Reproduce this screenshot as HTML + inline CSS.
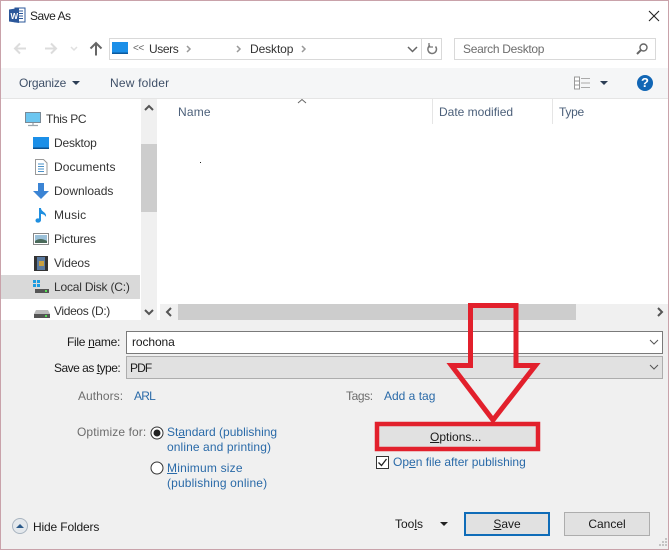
<!DOCTYPE html>
<html><head><meta charset="utf-8"><style>
html,body{margin:0;padding:0}
body{width:669px;height:550px;position:relative;overflow:hidden;background:#fff;font-family:"Liberation Sans",sans-serif;font-size:12px;color:#1a1a1a}
.a{position:absolute}
.t{position:absolute;white-space:nowrap;line-height:16px;height:16px}
.b{color:#2a6aa8}
.g{color:#6d6d6d}
.h{color:#4c607a}
u{text-decoration:underline}
.btn{position:absolute;box-sizing:border-box;background:#e1e1e1;border:1px solid #adadad;text-align:center;line-height:22px}
</style></head><body>
<div class="a" style="left:0;top:68px;width:669px;height:30px;background:#f5f6f7"></div>
<div class="a" style="left:0;top:98px;width:669px;height:1px;background:#e5e5e5"></div>
<div class="a" style="left:0;top:320px;width:669px;height:230px;background:#f0f0f0"></div>

<svg class="a" style="left:9px;top:7px" width="17" height="17" viewBox="0 0 17 17"><rect x="6" y="1" width="10" height="14" fill="#fff" stroke="#2b579a"/><path d="M10 4h4M10 6.500h4M10 9h4M10 11.500h4" stroke="#2b579a"/><path d="M0 2.500 10 1v15L0 14.500z" fill="#2b579a"/><text x="1.500" y="12" font-size="8" font-weight="bold" fill="#fff" font-family="Liberation Sans">W</text></svg>
<div class="t" style="left:30px;top:8px;letter-spacing:-.5px;color:#222">Save As</div>
<svg class="a" style="left:647px;top:9px" width="14" height="14"><path d="M2 2l10 10M12 2 2 12" stroke="#222" stroke-width="1.100" fill="none"/></svg>

<svg class="a" style="left:12px;top:40px" width="100" height="18"><g fill="none" stroke-width="2"><path d="M3 8.500h11M8 3.500l-5 5 5 5" stroke="#dcdcdc"/><path d="M33 8.500h11M39 3.500l5 5-5 5" stroke="#dcdcdc"/><path d="M59 7l3 3 3-3" stroke="#e0e0e0" stroke-width="1.500"/><path d="M84 15.500V3M78.500 8.500l5.500-5.500 5.500 5.500" stroke="#666"/></g></svg>
<div class="a" style="left:109px;top:38px;width:333px;height:22px;box-sizing:border-box;border:1px solid #d9d9d9;background:#fff"></div>
<svg class="a" style="left:112px;top:42px" width="17" height="13"><rect width="16" height="12" fill="#1b8fe8"/><rect y="10.500" width="16" height="1.500" fill="#0c5a9e"/></svg>
<div class="t" style="left:133px;top:41px;color:#666;font-size:10px;letter-spacing:-.5px">&lt;&lt;</div>
<div class="t" style="left:149px;top:41px;letter-spacing:-.4px;color:#333">Users</div>
<div class="t" style="left:250px;top:41px;letter-spacing:-.1px;color:#333">Desktop</div>
<svg class="a" style="left:180px;top:40px" width="130" height="18"><path d="M7 6l3 3-3 3M57 6l3 3-3 3M122 6l3 3-3 3" fill="none" stroke="#999" stroke-width="1.500"/></svg>
<svg class="a" style="left:406px;top:44px" width="14" height="10"><path d="M2 3l4.500 4.500L11 3" fill="none" stroke="#666" stroke-width="1.500"/></svg>
<div class="a" style="left:421px;top:38px;width:1px;height:22px;background:#d9d9d9"></div>
<svg class="a" style="left:425px;top:42px" width="14" height="14"><path d="M10.500 4.500A4.300 4.300 0 1 1 5 3.500" fill="none" stroke="#777" stroke-width="1.500"/><path d="M4 1v4h4" fill="none" stroke="#777" stroke-width="1.300"/></svg>
<div class="a" style="left:454px;top:38px;width:202px;height:22px;box-sizing:border-box;border:1px solid #d9d9d9;background:#fff"></div>
<div class="t" style="left:463px;top:41px;color:#6d6d6d;letter-spacing:-.3px">Search Desktop</div>
<svg class="a" style="left:635px;top:42px" width="14" height="14"><circle cx="8.500" cy="5.500" r="3.500" fill="none" stroke="#666" stroke-width="1.400"/><path d="M6 8l-4 4" stroke="#666" stroke-width="2"/></svg>

<div class="t h" style="left:19px;top:75px;letter-spacing:-.2px;color:#3f5068">Organize</div>
<svg class="a" style="left:72px;top:80px" width="9" height="6"><path d="M0 1h8L4 5z" fill="#2c3e55"/></svg>
<div class="t h" style="left:110px;top:75px;letter-spacing:.2px;color:#3f5068">New folder</div>
<svg class="a" style="left:574px;top:76px" width="34" height="14"><rect x=".500" y="1" width="5" height="12" fill="#fff" stroke="#999"/><path d="M1 5h4M1 9h4" stroke="#999"/><path d="M7 2.500h9M7 7h9M7 11.500h9" stroke="#aaa"/><path d="M26 5h8l-4 4z" fill="#2c3e55"/></svg>
<div class="a" style="left:637px;top:75px;width:16px;height:16px;border-radius:50%;background:#1166b5;color:#fff;font-weight:bold;font-size:13px;line-height:16px;text-align:center">?</div>

<div class="a" style="left:141px;top:99px;width:16px;height:221px;background:#f0f0f0"></div>
<div class="a" style="left:141px;top:144px;width:16px;height:68px;background:#cdcdcd"></div>
<svg class="a" style="left:143px;top:103px" width="12" height="10"><path d="M2 7l4-4 4 4" fill="none" stroke="#555" stroke-width="2"/></svg>
<svg class="a" style="left:143px;top:307px" width="12" height="10"><path d="M2 3l4 4 4-4" fill="none" stroke="#555" stroke-width="2"/></svg>
<div class="a" style="left:1px;top:275px;width:139px;height:24px;background:#d9d9d9"></div>

<svg class="a" style="left:25px;top:112px" width="17" height="15"><rect x="0.500" y=".500" width="15" height="10" fill="#6cc6f0" stroke="#7a8a96"/><path d="M8 11v2M3 13.500h10" stroke="#9aa5ad" stroke-width="1.200"/></svg>
<div class="t" style="left:46px;top:111px;letter-spacing:-.35px;color:#333">This PC</div>
<svg class="a" style="left:33px;top:137px" width="16" height="13"><rect width="16" height="12" fill="#1b8fe8"/><rect y="10.500" width="16" height="1.500" fill="#0c4f8c"/></svg>
<div class="t" style="left:54px;top:135px;letter-spacing:-.2px;color:#333">Desktop</div>
<svg class="a" style="left:35px;top:159px" width="13" height="16"><path d="M.5.500h8l3.500 3.500v11.500H.5z" fill="#fff" stroke="#999"/><path d="M3 5h6M3 7.500h6M3 10h6M3 12.500h6" stroke="#4a90c8"/></svg>
<div class="t" style="left:54px;top:159px;letter-spacing:.1px;color:#333">Documents</div>
<svg class="a" style="left:33px;top:183px" width="16" height="16"><path d="M5 0h6v8h5l-8 8-8-8h5z" fill="#3b84d4"/></svg>
<div class="t" style="left:54px;top:183px;color:#333">Downloads</div>
<svg class="a" style="left:35px;top:207px" width="13" height="16"><path d="M4 1h2c0 4 6 4 5 9-1-2-3-3-5-3v6c0 2-2 3-4 2.500S0 12 2 11.500c1-.3 2-.2 2 .2z" fill="#1f8fe0"/></svg>
<div class="t" style="left:54px;top:207px;letter-spacing:.2px;color:#333">Music</div>
<svg class="a" style="left:33px;top:233px" width="16" height="12"><rect x=".5" y=".5" width="15" height="11" fill="#fff" stroke="#888"/><rect x="2" y="2" width="12" height="8" fill="#9bc0d8"/><path d="M2 8q5-4 12 0v2H2z" fill="#4a6a5a"/></svg>
<div class="t" style="left:54px;top:231px;letter-spacing:-.2px;color:#333">Pictures</div>
<svg class="a" style="left:34px;top:256px" width="14" height="15"><rect width="14" height="15" fill="#333"/><rect x="3" y="1" width="8" height="13" fill="#5a7aa0"/><rect x="5" y="5" width="5" height="5" fill="#c8a040"/></svg>
<div class="t" style="left:54px;top:255px;letter-spacing:-.1px;color:#333">Videos</div>
<svg class="a" style="left:33px;top:280px" width="16" height="14"><rect x="0" y="0" width="3" height="3" fill="#1b9be0"/><rect x="4" y="0" width="3" height="3" fill="#1b9be0"/><rect x="0" y="4" width="3" height="3" fill="#1b9be0"/><rect x="4" y="4" width="3" height="3" fill="#1b9be0"/><rect x="2" y="9" width="14" height="4" fill="#555"/><rect x="12" y="10" width="2" height="2" fill="#5d5"/></svg>
<div class="t" style="left:54px;top:279px;letter-spacing:-.2px;color:#333">Local Disk (C:)</div>
<svg class="a" style="left:34px;top:309px" width="16" height="10"><path d="M2 1h12l2 4H0z" fill="#bbb"/><rect y="5" width="16" height="4" fill="#555"/><rect x="11" y="6" width="2" height="2" fill="#5d5"/></svg>
<div class="t" style="left:54px;top:303px;letter-spacing:-.35px;color:#333">Videos (D:)</div>

<div class="t" style="left:178px;top:104px;letter-spacing:.2px;color:#4c607a">Name</div>
<svg class="a" style="left:297px;top:98px" width="11" height="6"><path d="M1 5l4-3.500L9 5" fill="none" stroke="#666"/></svg>
<div class="a" style="left:432px;top:99px;width:1px;height:25px;background:#e5e5e5"></div>
<div class="a" style="left:552px;top:99px;width:1px;height:25px;background:#e5e5e5"></div>
<div class="t" style="left:439px;top:104px;color:#4c607a">Date modified</div>
<div class="t" style="left:559px;top:104px;letter-spacing:-.3px;color:#4c607a">Type</div>
<div class="a" style="left:200px;top:162px;width:1px;height:1px;background:#222"></div>

<div class="a" style="left:160px;top:304px;width:509px;height:16px;background:#f0f0f0"></div>
<div class="a" style="left:178px;top:304px;width:398px;height:16px;background:#cdcdcd"></div>
<svg class="a" style="left:164px;top:306px" width="10" height="12"><path d="M7 2L3 6l4 4" fill="none" stroke="#555" stroke-width="2"/></svg>
<svg class="a" style="left:655px;top:306px" width="10" height="12"><path d="M3 2l4 4-4 4" fill="none" stroke="#555" stroke-width="2"/></svg>

<div class="t" style="left:67px;top:334px;letter-spacing:-.3px">File <u>n</u>ame:</div>
<div class="t" style="left:54px;top:360px;letter-spacing:-.5px">Save as <u>t</u>ype:</div>
<div class="a" style="left:126px;top:331px;width:537px;height:23px;box-sizing:border-box;border:1px solid #7a7a7a;background:#fff"></div>
<div class="t" style="left:132px;top:334px;letter-spacing:-.1px">rochona</div>
<div class="a" style="left:126px;top:356px;width:537px;height:23px;box-sizing:border-box;border:1px solid #adadad;background:#e1e1e1"></div>
<div class="t" style="left:130px;top:360px;letter-spacing:-.9px">PDF</div>
<svg class="a" style="left:648px;top:338px" width="12" height="36"><path d="M2 2l4 4 4-4M2 27l4 4 4-4" fill="none" stroke="#555"/></svg>

<div class="t g" style="left:78px;top:388px;letter-spacing:.05px">Authors:</div>
<div class="t b" style="left:134px;top:388px;letter-spacing:-.8px">ARL</div>
<div class="t g" style="left:346px;top:388px;letter-spacing:-.4px">Tags:</div>
<div class="t b" style="left:384px;top:388px">Add a tag</div>
<div class="t g" style="left:77px;top:424px;letter-spacing:.1px">Optimize for:</div>
<svg class="a" style="left:150px;top:426px" width="14" height="14"><circle cx="7" cy="7" r="6" fill="#fff" stroke="#333"/><circle cx="7" cy="7" r="3.500" fill="#222"/></svg>
<div class="t b" style="left:167px;top:424px">St<u>a</u>ndard (publishing</div>
<div class="t b" style="left:167px;top:439px;letter-spacing:.1px">online and printing)</div>
<svg class="a" style="left:150px;top:461px" width="14" height="14"><circle cx="7" cy="7" r="6" fill="#fff" stroke="#333"/></svg>
<div class="t b" style="left:167px;top:460px;letter-spacing:.2px"><u>M</u>inimum size</div>
<div class="t b" style="left:167px;top:475px;letter-spacing:.15px">(publishing online)</div>

<div class="a" style="left:377px;top:424px;width:161px;height:25px;background:#e1e1e1"></div>
<div class="t" style="left:430px;top:429px"><u>O</u>ptions...</div>
<svg class="a" style="left:0;top:0" width="669" height="550"><path d="M470.500 305.500H516V365.500H535.500L493 420 451.500 365.500H470.500Z" fill="none" stroke="#e2202c" stroke-width="5" stroke-linejoin="miter"/><rect x="377" y="424" width="161" height="25" fill="none" stroke="#e2202c" stroke-width="4.500"/></svg>

<svg class="a" style="left:376px;top:456px" width="13" height="13"><rect x=".5" y=".5" width="12" height="12" fill="#fff" stroke="#333"/><path d="M2.500 6.500l3 3 5-6.500" fill="none" stroke="#222" stroke-width="1.300"/></svg>
<div class="t b" style="left:393px;top:454px">Op<u>e</u>n file after publishing</div>

<div class="a" style="left:12px;top:518px;width:16px;height:16px;box-sizing:border-box;border:1px solid #a8b4c0;border-radius:50%;background:#e4e8ec"></div>
<svg class="a" style="left:15px;top:523px" width="10" height="6"><path d="M1 5l4-4 4 4z" fill="#2c5a8a"/></svg>
<div class="t" style="left:33px;top:519px;letter-spacing:-.15px">Hide Folders</div>
<div class="t" style="left:395px;top:516px;letter-spacing:0">Too<u>l</u>s</div>
<svg class="a" style="left:440px;top:521px" width="8" height="6"><path d="M0 1h8L4 5z" fill="#222"/></svg>
<div class="btn" style="left:464px;top:512px;width:86px;height:24px;border:2px solid #0f6cb8;line-height:20px"><u>S</u>ave</div>
<div class="btn" style="left:564px;top:512px;width:86px;height:24px">Cancel</div>
<svg class="a" style="left:656px;top:537px" width="12" height="12"><path d="M9 1h2v2H9zM6 4h2v2H6zM9 4h2v2H9zM3 7h2v2H3zM6 7h2v2H6zM9 7h2v2H9z" fill="#c4c4c4"/></svg>

<div class="a" style="left:0;top:0;width:669px;height:550px;box-sizing:border-box;border:1px solid #c9a2aa;pointer-events:none"></div>
</body></html>
